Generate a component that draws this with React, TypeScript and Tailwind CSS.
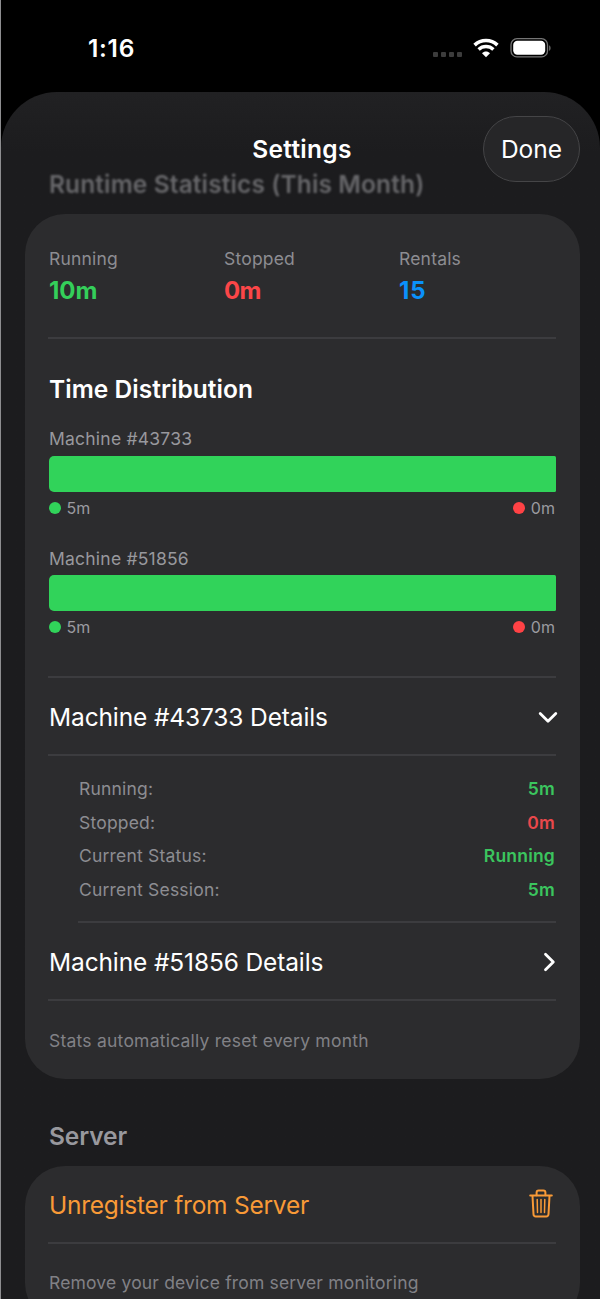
import React from "react";

const totals = [
  { label: "Running", value: "10m", color: "text-[#34cf5a]", tracking: "tracking-normal" },
  { label: "Stopped", value: "0m", color: "text-[#fb4648]", tracking: "tracking-[-0.8px]" },
  { label: "Rentals", value: "15", color: "text-[#0a91fb]", tracking: "tracking-[1px]" },
];

const machines = [
  { id: "43733", running: 5, stopped: 0 },
  { id: "51856", running: 5, stopped: 0 },
];

const details = [
  { label: "Running:", value: "5m", color: "text-[#3bc55e]" },
  { label: "Stopped:", value: "0m", color: "text-[#e9484b]" },
  { label: "Current Status:", value: "Running", color: "text-[#3bc55e]" },
  { label: "Current Session:", value: "5m", color: "text-[#3bc55e]" },
];

const StatusBar = () => {
  return (
    <div className="flex h-[92px] shrink-0 items-start justify-between pl-[87px] pr-[48px] pt-[33px]">
      <span className="text-[24.5px] leading-[30px] font-semibold tracking-[0.7px] text-white">
        1:16
      </span>
      <div className="flex h-[30px] items-center">
        <div className="mt-[13px] flex gap-[3px]">
          {Array(4)
            .fill(null)
            .map((_, i) => (
              <div key={i} className="h-[5px] w-[5px] rounded-[1px] bg-[#3c3c3c]"></div>
            ))}
        </div>
        <svg className="ml-[11px] h-[20px] w-[26px]" viewBox="0 0 26 20" fill="none">
          <path d="M1.6 7.1C8 1 18 1 24.4 7.1" stroke="white" strokeWidth="3.6" />
          <path d="M5.6 11.4C9.8 7.5 16.2 7.5 20.4 11.4" stroke="white" strokeWidth="3.4" />
          <path d="M9 15.2C11.3 13 14.7 13 17 15.2L13 19.2Z" fill="white" />
        </svg>
        <svg className="ml-[11px] h-[20px] w-[42px]" viewBox="0 0 42 20" fill="none">
          <rect x="1" y="0.7" width="36.5" height="18.2" rx="6" stroke="#757575" strokeWidth="1.3" />
          <rect x="3.2" y="2.8" width="32" height="14" rx="4.2" fill="white" />
          <path d="M39.2 7.2C41 8 41 12 39.2 12.8Z" fill="#757575" />
        </svg>
      </div>
    </div>
  );
};

const Divider = () => <div className="h-[2px] w-full shrink-0 bg-[#3c3c3f]"></div>;

const Legend = ({ color, value }: { color: string; value: number }) => {
  return (
    <div className="flex items-center gap-[6px]">
      <div className={`h-3 w-3 rounded-full ${color}`}></div>
      <span className="text-[16px] leading-5 tracking-[0.1px] text-[#9b9ba0]">{value}m</span>
    </div>
  );
};

const MachineBar = ({ id, running, stopped }: (typeof machines)[number]) => {
  return (
    <div className="flex h-[119.5px] flex-col">
      <span className="pl-px text-[17.5px] leading-6 tracking-[0.22px] text-[#98989d]">
        Machine #{id}
      </span>
      <div className="mt-[4.5px] ml-[0.5px] flex h-9 overflow-hidden rounded-l-[5px] rounded-r-[1.5px]">
        <div
          className="bg-[#31d35a]"
          style={{ width: `${(running / (running + stopped)) * 100}%` }}
        ></div>
        <div className="flex-1 bg-[#ff4245]"></div>
      </div>
      <div className="mt-[6px] flex justify-between pr-px pl-[0.5px]">
        <Legend color="bg-[#31d35a]" value={running} />
        <Legend color="bg-[#ff4245]" value={stopped} />
      </div>
    </div>
  );
};

const DetailsRow = ({ id, open }: { id: string; open: boolean }) => {
  return (
    <div className="flex h-[76px] shrink-0 items-center justify-between pt-[3px] pl-px">
      <span className="text-[24.5px] tracking-[-0.13px] text-white">Machine #{id} Details</span>
      {open ? (
        <svg className="-mr-[2px] mb-px h-[20px] w-[20px]" viewBox="0 0 20 20" fill="none">
          <path d="M2.2 6.6L10 14.2L17.8 6.6" stroke="white" strokeWidth="2.8" strokeLinecap="round" strokeLinejoin="round" />
        </svg>
      ) : (
        <svg className="mb-px h-[20px] w-[14px]" viewBox="0 0 14 20" fill="none">
          <path d="M3.5 2.2L11.3 10L3.5 17.8" stroke="white" strokeWidth="2.8" strokeLinecap="round" strokeLinejoin="round" />
        </svg>
      )}
    </div>
  );
};

const TrashIcon = () => {
  return (
    <svg
      className="mr-[3px] mb-[2px] h-[30px] w-6"
      viewBox="0 0 24 30"
      fill="none"
      stroke="#f99a37"
      strokeWidth="2"
      strokeLinecap="round"
      strokeLinejoin="round"
    >
      <path d="M1.2 6.6H22.8" />
      <path d="M7.6 6.2V3.6C7.6 2.2 8.3 1.6 9.6 1.6H14.4C15.7 1.6 16.4 2.2 16.4 3.6V6.2" />
      <path d="M3.5 7L4.5 25.2C4.6 26.7 5.3 27.4 6.8 27.4H17.2C18.7 27.4 19.4 26.7 19.5 25.2L20.5 7" />
      <path d="M8.2 10.5L8.5 23.6M12 10.5V23.6M15.8 10.5L15.5 23.6" strokeWidth="1.5" />
    </svg>
  );
};

export default function App() {
  return (
    <div className="flex h-[1299px] w-[600px] flex-col overflow-hidden border-l border-[#8e8e90] bg-black font-['Inter','Liberation_Sans',sans-serif]">
      <StatusBar />

      <div className="flex flex-1 flex-col overflow-hidden rounded-t-[56px] bg-[#1c1c1e] bg-linear-to-b from-[#212123] to-[#1c1c1e] to-[60px] px-6">
        <div className="flex h-[121.5px] shrink-0 flex-col">
          <div className="relative flex h-[77px] items-start justify-center pt-[42px] pl-[3px]">
            <h1 className="text-[24.5px] leading-[30px] font-semibold tracking-[0.3px] text-white">
              Settings
            </h1>
            <button className="absolute top-6 -right-[4px] flex h-[66px] w-[97px] items-center justify-center rounded-full border border-[#454547] bg-[#262628] text-[24.5px] text-white">
              Done
            </button>
          </div>
          <h2 className="pl-6 text-[24.5px] leading-[30px] font-semibold tracking-[0.12px] text-[#67676a] blur-[1.1px]">
            Runtime Statistics (This Month)
          </h2>
        </div>

        <section className="-mr-[4px] flex h-[865px] w-[555px] shrink-0 flex-col rounded-[40px] bg-[#2c2c2e] pr-6 pl-[23px]">
          <div className="grid h-[123.5px] shrink-0 grid-cols-[175px_175px_1fr] pt-[33.5px] pl-px">
            {totals.map((item) => (
              <div key={item.label} className="flex flex-col">
                <span className="text-[17.5px] leading-6 tracking-[0.2px] text-[#8d8d92]">
                  {item.label}
                </span>
                <span className={`mt-[5px] text-[24px] leading-[30px] font-bold ${item.tracking} ${item.color}`}>
                  {item.value}
                </span>
              </div>
            ))}
          </div>
          <Divider />

          <div className="flex h-[337px] shrink-0 flex-col pt-[34.5px]">
            <h3 className="mb-[23.5px] pl-px text-[24.5px] leading-[30px] font-semibold tracking-[0.05px] text-white">
              Time Distribution
            </h3>
            {machines.map((machine) => (
              <MachineBar key={machine.id} {...machine} />
            ))}
          </div>
          <Divider />

          <DetailsRow id="43733" open={true} />
          <Divider />

          <div className="flex h-[165px] shrink-0 flex-col pt-[16.5px] pr-px pl-[31px]">
            {details.map((item) => (
              <div key={item.label} className="flex h-[33.5px] items-center justify-between text-[17.5px] tracking-[0.2px]">
                <span className="text-[#8d8d92]">{item.label}</span>
                <span className={`font-semibold ${item.color}`}>{item.value}</span>
              </div>
            ))}
          </div>
          <div className="pl-[30px]">
            <Divider />
          </div>

          <DetailsRow id="51856" open={false} />
          <Divider />

          <p className="flex flex-1 items-center pt-[2px] pl-px text-[17.5px] tracking-[0.23px] text-[#818186]">
            Stats automatically reset every month
          </p>
        </section>

        <h2 className="mt-[42px] mb-[15px] pl-6 text-[24.5px] leading-[30px] font-semibold tracking-[-0.1px] text-[#98989d]">
          Server
        </h2>

        <section className="-mr-[4px] h-[157px] w-[555px] shrink-0 rounded-[40px] bg-[#2c2c2e] pr-6 pl-[23px]">
          <div className="flex h-[76.5px] items-center justify-between pt-[3px] pl-px">
            <span className="text-[24.5px] tracking-[-0.24px] text-[#f99a37]">
              Unregister from Server
            </span>
            <TrashIcon />
          </div>
          <Divider />
          <p className="flex h-[78px] items-center pt-px pl-px text-[17.5px] tracking-[0.17px] text-[#818186]">
            Remove your device from server monitoring
          </p>
        </section>
      </div>
    </div>
  );
}
